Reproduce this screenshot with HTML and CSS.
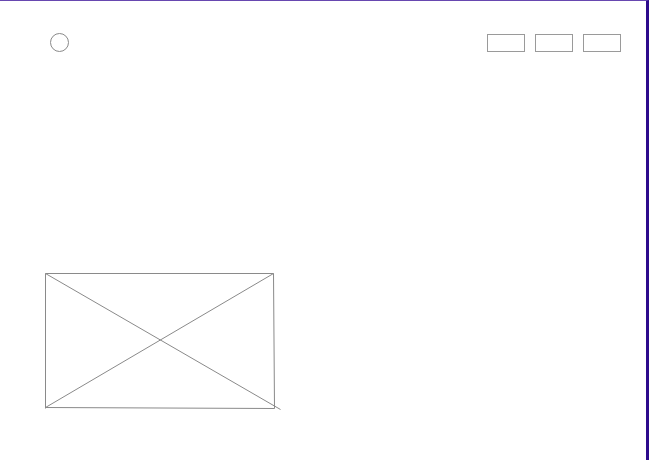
FILE: index.html
```html
<!DOCTYPE html>
<html>
<head>
<meta charset="utf-8">
<link rel="stylesheet" href="styles.css">
</head>
<body>
<div class="page">
  <header class="header">
    <div class="logo"></div>
    <nav class="nav">
      <div class="nav-btn"></div>
      <div class="nav-btn"></div>
      <div class="nav-btn"></div>
    </nav>
  </header>
  <div class="placeholder">
    <svg class="ph-svg" width="240" height="140" viewBox="0 0 240 140">
      <g stroke="#8a8a8a" stroke-width="1" fill="none">
        <path d="M0.5 0.5 L228.5 0.5"/>
        <path d="M228.5 0.5 L229.5 135.5"/>
        <path d="M0.5 134.5 L229.5 135.5"/>
        <path d="M0.5 0.5 L0.5 135.5"/>
        <path d="M0.5 0.5 L235.5 136.5"/>
        <path d="M228.5 0.5 L0.5 134.5"/>
      </g>
    </svg>
  </div>
</div>
</body>
</html>
```
FILE: styles.css
```css
html, body {
  margin: 0;
  padding: 0;
  background: #ffffff;
}
.page {
  width: 649px;
  height: 460px;
  box-sizing: border-box;
  border-top: 1px solid #6747b0;
  border-right: 3px solid #2d0b8c;
  padding: 32px 25px 0 45px;
}
.header {
  display: flex;
  justify-content: space-between;
  align-items: center;
  height: 19px;
}
.logo {
  width: 17px;
  height: 17px;
  margin-left: 5px;
  border: 1px solid #8a8a8a;
  border-radius: 50%;
}
.nav {
  display: flex;
  gap: 10px;
}
.nav-btn {
  width: 36px;
  height: 16px;
  border: 1px solid #9a9a9a;
}
.placeholder {
  margin-top: 221px;
  width: 240px;
  height: 140px;
}
.ph-svg {
  display: block;
  overflow: visible;
}
```
